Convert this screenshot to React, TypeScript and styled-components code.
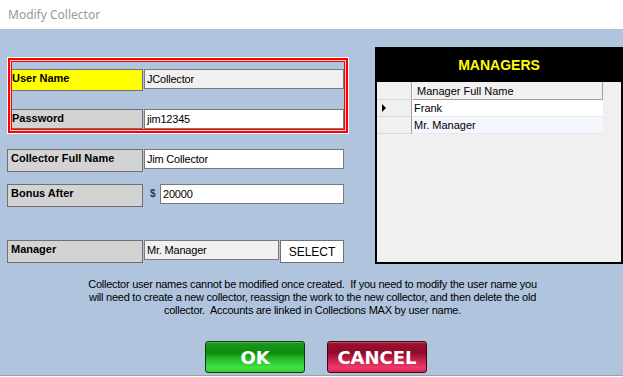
import styled, { createGlobalStyle } from "styled-components"

const Global = createGlobalStyle`
  html, body {
    margin: 0;
    padding: 0;
    width: 623px;
    height: 377px;
    overflow: hidden;
    background: #ffffff;
  }
  * { box-sizing: border-box; }
`

const Window = styled.div`
  width: 623px;
  height: 377px;
  display: flex;
  flex-direction: column;
  background: #ffffff;
  font-family: "Liberation Sans", Arial, sans-serif;
`

const TitleBar = styled.div`
  height: 29px;
  flex: none;
  display: flex;
  align-items: center;
  padding-left: 8px;
  padding-bottom: 1px;
  font-family: "Noto Sans", "Open Sans", sans-serif;
  font-size: 12px;
  color: #999999;
`

const Body = styled.div`
  height: 347px;
  flex: none;
  background: #b0c4de;
  border-bottom: 1px solid #a0a0a0;
  display: flex;
  flex-direction: column;
`

const Top = styled.div`
  display: flex;
  align-items: flex-start;
  gap: 26px;
  padding: 18px 0 0 7px;
`

const FormColumn = styled.div`
  width: 342px;
  padding-top: 10px;
  display: flex;
  flex-direction: column;
`

const Highlight = styled.div`
  border: 1px solid #ffffff;
  box-shadow: inset 0 0 0 2px #ff0000, inset 0 0 0 3px #ffd0d0, inset 0 0 0 4px #ff0000;
  padding: 11px 5px 4px 4px;
  height: 77px;
`

const Row = styled.div<{ $top?: number }>`
  display: flex;
  align-items: flex-start;
  margin-top: ${(p) => p.$top ?? 0}px;
`

const Label = styled.div<{ $bg?: string; $w: number; $h: number; $pad?: number }>`
  width: ${(p) => p.$w}px;
  height: ${(p) => p.$h}px;
  flex: none;
  background: ${(p) => p.$bg ?? "#d3d3d3"};
  border: 1px solid #707070;
  border-left-width: ${(p) => (p.$pad === 0 ? 0 : 1)}px;
  padding: 2px 0 0 ${(p) => p.$pad ?? 3}px;
  font-weight: bold;
  font-size: 11px;
  line-height: 13px;
  color: #000000;
  white-space: nowrap;
`

const Field = styled.div<{ $disabled?: boolean; $w?: number }>`
  width: ${(p) => p.$w ?? 200}px;
  height: 20px;
  flex: none;
  margin-left: 1px;
  background: ${(p) => (p.$disabled ? "#f0f0f0" : "#ffffff")};
  border: 1px solid #7a7a7a;
  padding-left: 2px;
  display: flex;
  align-items: center;
  font-size: 11px;
  letter-spacing: -0.2px;
  color: #000000;
  white-space: nowrap;
`

const Dollar = styled.span`
  width: 16px;
  flex: none;
  padding: 4px 0 0 7px;
  font-size: 10px;
  font-weight: bold;
  color: #2b3a55;
`

const SelectButton = styled.div`
  width: 64px;
  height: 23px;
  flex: none;
  margin-left: 1px;
  background: #ffffff;
  border: 1px solid #707070;
  display: flex;
  align-items: center;
  justify-content: center;
  font-size: 12px;
  color: #000000;
`

const Panel = styled.div`
  width: 248px;
  height: 217px;
  background: #f0f0f0;
  border: 2px solid #000000;
  display: flex;
  flex-direction: column;
`

const PanelHeader = styled.div`
  height: 33px;
  flex: none;
  background: #000000;
  color: #ffff00;
  font-weight: bold;
  font-size: 14px;
  display: flex;
  align-items: center;
  justify-content: center;
  padding-bottom: 1px;
`

const GridRow = styled.div<{ $h?: number }>`
  display: flex;
  height: ${(p) => p.$h ?? 17}px;
`

const RowHead = styled.div`
  width: 35px;
  flex: none;
  background: #f0f0f0;
  border-right: 1px solid #a0a0a0;
  border-bottom: 1px solid #d8d8d8;
  display: flex;
  align-items: center;
  padding-left: 5px;
`

const ColHead = styled.div`
  width: 191px;
  flex: none;
  background: #f0f0f0;
  border-right: 1px solid #a0a0a0;
  border-bottom: 1px solid #a0a0a0;
  border-left: 1px solid #ffffff;
  padding-left: 4px;
  display: flex;
  align-items: center;
  font-size: 11px;
  color: #000000;
`

const Cell = styled.div<{ $alt?: boolean }>`
  width: 191px;
  flex: none;
  background: ${(p) => (p.$alt ? "#f4f7fe" : "#ffffff")};
  border-bottom: 1px solid #e6e9f0;
  padding-left: 2px;
  display: flex;
  align-items: center;
  font-size: 11px;
  color: #000000;
`

const Arrow = styled.div`
  width: 0;
  height: 0;
  border-top: 4px solid transparent;
  border-bottom: 4px solid transparent;
  border-left: 4px solid #000000;
`

const Note = styled.p`
  margin: 14px 0 0 0;
  text-align: center;
  font-size: 11px;
  line-height: 13px;
  letter-spacing: -0.25px;
  color: #000000;
  padding-left: 2px;
`

const Buttons = styled.div`
  display: flex;
  justify-content: center;
  gap: 22px;
  margin-top: 24px;
  padding-left: 9px;
`

const BigButton = styled.div<{ $tone: "ok" | "cancel" }>`
  width: 100px;
  height: 32px;
  border-radius: 3px;
  border: 1px solid ${(p) => (p.$tone === "ok" ? "#123812" : "#3a0612")};
  background: ${(p) =>
    p.$tone === "ok"
      ? "linear-gradient(to bottom, #1a9a1a 0%, #0f8c0f 35%, #26b826 55%, #42e242 85%, #35cf35 100%)"
      : "linear-gradient(to bottom, #a01232 0%, #8c0a28 35%, #c01a48 55%, #ec3a68 85%, #d82a58 100%)"};
  box-shadow: inset 0 1px 0 rgba(255, 255, 255, 0.25);
  display: flex;
  align-items: center;
  justify-content: center;
  color: #ffffff;
  font-family: "DejaVu Sans", sans-serif;
  font-weight: bold;
  font-size: 18px;
  padding-top: 1px;
`

export default function App() {
  return (
    <Window>
      <Global />
      <TitleBar>Modify Collector</TitleBar>
      <Body>
        <Top>
          <FormColumn>
            <Highlight>
              <Row>
                <Label $bg="#ffff00" $w={131} $h={22} $pad={0}>User Name</Label>
                <Field $disabled>JCollector</Field>
              </Row>
              <Row $top={18}>
                <Label $w={131} $h={20} $pad={0}>Password</Label>
                <Field>jim12345</Field>
              </Row>
            </Highlight>
            <Row $top={15}>
              <Label $w={136} $h={23}>Collector Full Name</Label>
              <Field>Jim Collector</Field>
            </Row>
            <Row $top={12}>
              <Label $w={136} $h={23}>Bonus After</Label>
              <Dollar>$</Dollar>
              <Field $w={184}>20000</Field>
            </Row>
            <Row $top={33}>
              <Label $w={136} $h={23}>Manager</Label>
              <Field $disabled $w={135}>Mr. Manager</Field>
              <SelectButton>SELECT</SelectButton>
            </Row>
          </FormColumn>
          <Panel>
            <PanelHeader>MANAGERS</PanelHeader>
            <GridRow $h={18}>
              <RowHead />
              <ColHead>Manager Full Name</ColHead>
            </GridRow>
            <GridRow>
              <RowHead>
                <Arrow />
              </RowHead>
              <Cell>Frank</Cell>
            </GridRow>
            <GridRow>
              <RowHead />
              <Cell $alt>Mr. Manager</Cell>
            </GridRow>
          </Panel>
        </Top>
        <Note>
          Collector user names cannot be modified once created.&nbsp; If you need to modify the user name you
          <br />
          will need to create a new collector, reassign the work to the new collector, and then delete the old
          <br />
          collector.&nbsp; Accounts are linked in Collections MAX by user name.
        </Note>
        <Buttons>
          <BigButton $tone="ok">OK</BigButton>
          <BigButton $tone="cancel">CANCEL</BigButton>
        </Buttons>
      </Body>
    </Window>
  )
}
